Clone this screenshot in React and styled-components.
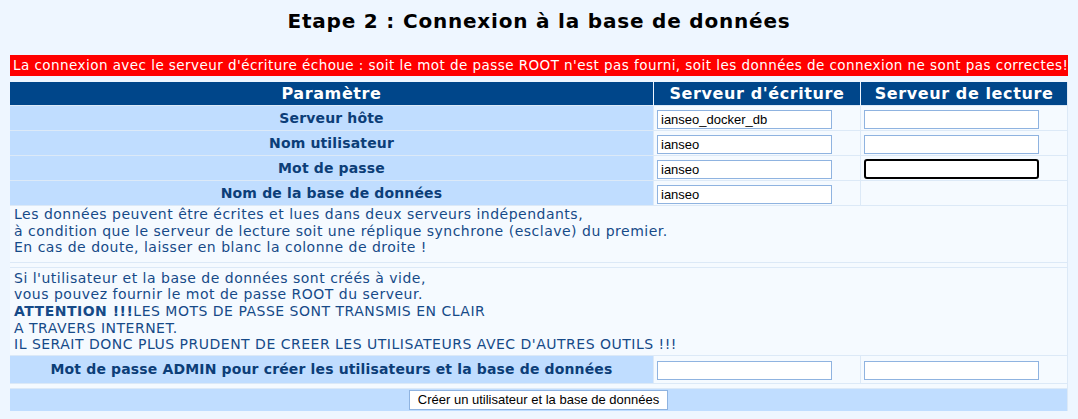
import React from "react";
import styled, { createGlobalStyle } from "styled-components";

const GlobalStyle = createGlobalStyle`
  body {
    margin: 0;
    background: #eef6ff;
    font-family: "DejaVu Sans", Verdana, sans-serif;
  }
`;

const Page = styled.div`
  padding: 0 10px;
`;

const Title = styled.h2`
  margin: 0;
  padding: 9px 0 22px;
  text-align: center;
  font-size: 20px;
  letter-spacing: 0.8px;
  line-height: 24px;
  font-weight: bold;
  color: #000;
`;

const ErrorBar = styled.div`
  background: #ff0000;
  color: #fff;
  font-size: 13.5px;
  letter-spacing: 0.45px;
  line-height: 21px;
  height: 21px;
  padding-left: 3px;
  white-space: nowrap;
  overflow: hidden;
  margin-bottom: 6px;
`;

const Table = styled.table`
  width: 100%;
  border-collapse: collapse;
  font-size: 13px;
  border-right: 1px solid #dce9f7;
`;

const Th = styled.th`
  background: #00468a;
  color: #fff;
  font-size: 16px;
  letter-spacing: 0.6px;
  font-weight: bold;
  height: 23px;
  padding: 0;
  border-left: 1px solid #eef6ff;
  width: ${(p) => p.$w || "auto"};
  &:first-child {
    border-left: none;
  }
`;

const Row = styled.tr`
  border-top: 1px solid #dce9f7;
`;

const Label = styled.td`
  background: #c0ddff;
  color: #0c3e78;
  font-weight: bold;
  font-size: 14px;
  letter-spacing: 0.15px;
  text-align: center;
  height: ${(p) => p.$h || "24px"};
  padding: 0;
`;

const Cell = styled.td`
  background: #f5faff;
  padding: 0 0 0 3px;
  border-left: 1px solid #dce9f7;
  height: 24px;
`;

const Input = styled.input`
  box-sizing: border-box;
  width: 175px;
  height: ${(p) => (p.$focused ? "20px" : "19px")};
  margin: 2px 0 0;
  font-family: "Liberation Sans", Arial, sans-serif;
  font-size: 13px;
  color: #000;
  padding: 0 3px;
  background: #fff;
  border: ${(p) => (p.$focused ? "2px solid #000" : "1px solid #8fb3e0")};
  border-radius: ${(p) => (p.$focused ? "3px" : "0")};
  outline: none;
  display: block;
`;

const Note = styled.td`
  background: #f5faff;
  color: #164a88;
  padding: ${(p) => p.$pad || "0 4px 6px"};
  line-height: 16.6px;
  font-size: 14px;
  letter-spacing: 0.5px;
`;

const Spacer = styled.tr`
  border-top: 1px solid #dce9f7;
  td {
    height: 4px;
    padding: 0;
    background: #f5faff;
  }
`;

const ButtonCell = styled.td`
  background: #c0ddff;
  text-align: center;
  height: 22px;
  padding: 0;
`;

const Button = styled.button`
  font-family: "Liberation Sans", Arial, sans-serif;
  font-size: 13px;
  color: #000;
  background: #fff;
  border: 1px solid #8fb3e0;
  padding: 1px 8px 2px;
  margin-top: 1px;
`;

const fields = [
  { label: "Serveur hôte", w: "ianseo_docker_db", r: "" },
  { label: "Nom utilisateur", w: "ianseo", r: "" },
  { label: "Mot de passe", w: "ianseo", r: "", focus: true },
  { label: "Nom de la base de données", w: "ianseo", r: null },
];

export default function App() {
  return (
    <Page>
      <GlobalStyle />
      <Title>Etape 2 : Connexion à la base de données</Title>
      <ErrorBar>
        La connexion avec le serveur d'écriture échoue : soit le mot de passe ROOT n'est pas fourni, soit les données de connexion ne sont pas correctes!
      </ErrorBar>
      <Table>
        <thead>
          <tr>
            <Th>Paramètre</Th>
            <Th $w="206px">Serveur d'écriture</Th>
            <Th $w="206px">Serveur de lecture</Th>
          </tr>
        </thead>
        <tbody>
          {fields.map((f) => (
            <Row key={f.label}>
              <Label>{f.label}</Label>
              <Cell>
                <Input defaultValue={f.w} />
              </Cell>
              <Cell>
                {f.r !== null && <Input defaultValue={f.r} $focused={f.focus} />}
              </Cell>
            </Row>
          ))}
          <Row>
            <Note colSpan={3}>
              Les données peuvent être écrites et lues dans deux serveurs indépendants,
              <br />
              à condition que le serveur de lecture soit une réplique synchrone (esclave) du premier.
              <br />
              En cas de doute, laisser en blanc la colonne de droite !
            </Note>
          </Row>
          <Spacer>
            <td colSpan={3} />
          </Spacer>
          <Row>
            <Note colSpan={3} $pad="2px 4px 2px">
              Si l'utilisateur et la base de données sont créés à vide,
              <br />
              vous pouvez fournir le mot de passe ROOT du serveur.
              <br />
              <b>ATTENTION !!!</b>LES MOTS DE PASSE SONT TRANSMIS EN CLAIR
              <br />
              A TRAVERS INTERNET.
              <br />
              IL SERAIT DONC PLUS PRUDENT DE CREER LES UTILISATEURS AVEC D'AUTRES OUTILS !!!
            </Note>
          </Row>
          <Row>
            <Label $h="27px">Mot de passe ADMIN pour créer les utilisateurs et la base de données</Label>
            <Cell>
              <Input type="password" />
            </Cell>
            <Cell>
              <Input type="password" />
            </Cell>
          </Row>
          <Spacer>
            <td colSpan={3} />
          </Spacer>
          <Row>
            <ButtonCell colSpan={3}>
              <Button type="button">Créer un utilisateur et la base de données</Button>
            </ButtonCell>
          </Row>
        </tbody>
      </Table>
    </Page>
  );
}
